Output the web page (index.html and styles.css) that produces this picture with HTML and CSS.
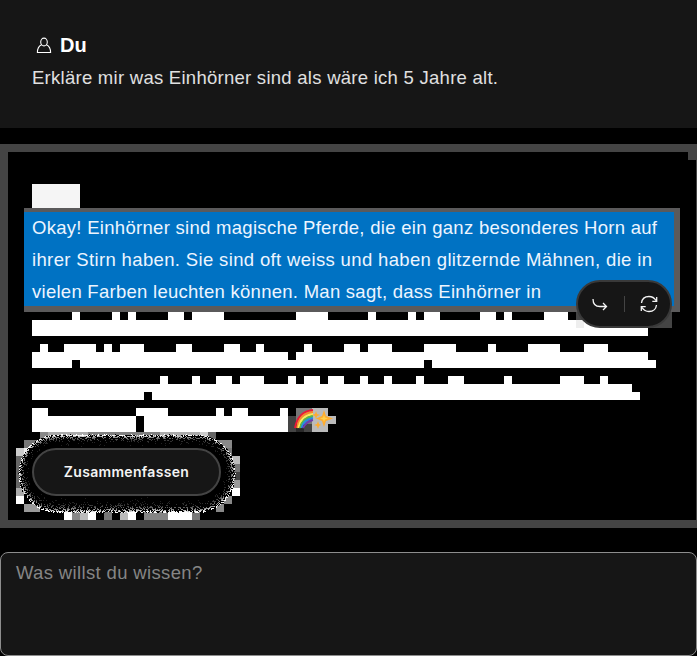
FILE: index.html
```
<!DOCTYPE html>
<html lang="de">
<head>
<meta charset="utf-8">
<title>Chat</title>
<link rel="stylesheet" href="styles.css">
</head>
<body>
<main class="chat">
  <section class="question">
    <h1 class="author">
      <svg class="user-icon" viewBox="0 0 16 17" aria-hidden="true"><ellipse cx="8" cy="5" rx="3.3" ry="3.9"/><path d="M5.6 7.8C3 9 1.4 11.8 1.4 15.5H14.6C14.6 11.8 13 9 10.4 7.8"/></svg>
      <span>Du</span>
    </h1>
    <p class="prompt"><span class="fit" data-width="466">Erkläre mir was Einhörner sind als wäre ich 5 Jahre alt.</span></p>
  </section>
  <section class="answer">
    <svg class="mosaic" viewBox="0 0 697 384" aria-hidden="true" shape-rendering="crispEdges">
      <path id="blocks" fill="#fff"/>
      <path fill="#f5f5f5" d="M32 40h48v24H32z"/>
      <path fill="#444" d="M688 8h9v8h-9z"/>
      <g id="greys"></g>
    </svg>
    <svg class="emoji" viewBox="0 0 48 24" aria-hidden="true">
      <path fill="#777" d="M8 0h16v8H8z"/><path fill="#444" d="M0 8h8v16H0zM16 16h8v8h-8z"/><path fill="#777" d="M8 8h16v8H8z"/><path fill="#292929" d="M8 16h8v8H8z"/><path fill="#bbb" d="M24 0h16v24H24zM40 8h8v8h-8z"/>
      <g fill="none" stroke-width="1.8"><path stroke="#ed1738" d="M7 20C9 8 15 3 25 2"/><path stroke="#ff872b" d="M9 20C11 9 16 5 25 4"/><path stroke="#ffe85a" d="M10.5 20C12 11 17 7 25 6"/><path stroke="#58bd45" d="M12 20C14 12 18 9 25 8"/><path stroke="#268de3" d="M13.5 20C15 14 19 11 25 10"/><path stroke="#713bb0" d="M15 20C17 16 20 13 25 12"/></g>
      <path fill="#ffac2e" d="M36 2l2 6 7 2.5-7 2.5-2 6-2-6-6-2.5 6-2.5zM28 3l1 3 3 1-3 1-1 3-1-3-3-1 3-1zM30 13l1 3 2 1-2 1-1 3-1-3-3-1 3-1z"/>
      <path fill="#ffd04a" d="M36 7l1 2.5 3 1-3 1-1 2.5-1-2.5-3-1 3-1z"/>
    </svg>
    <div class="selection">
      <p><span class="fit" data-width="625">Okay! Einhörner sind magische Pferde, die ein ganz besonderes Horn auf</span></p>
      <p><span class="fit" data-width="620">ihrer Stirn haben. Sie sind oft weiss und haben glitzernde Mähnen, die in</span></p>
      <p><span class="fit" data-width="509">vielen Farben leuchten können. Man sagt, dass Einhörner in</span></p>
    </div>
    <div class="toolbar">
      <svg class="tool-icon" viewBox="0 0 20 20" aria-hidden="true"><path d="M3 5C3 10 6 12.5 10 12.5H16.5M13 9l3.5 3.5L13 16"/></svg>
      <span class="divider"></span>
      <svg class="tool-icon" viewBox="0 0 20 20" aria-hidden="true"><path d="M2.5 9C3 5 6 2.5 10 2.5c3.2 0 5.5 1.6 7 4M17.7 3v4.3h-4.4M17.5 11c-.5 4-3.5 6.5-7.5 6.5-3.2 0-5.5-1.6-7-4M2.3 17v-4.3h4.4"/></svg>
    </div>
    <div class="action">
      <canvas class="halo" id="halo" width="224" height="88"></canvas>
      <button class="summarize"><span class="fit" data-width="125">Zusammenfassen</span></button>
    </div>
  </section>
  <textarea class="composer" placeholder="Was willst du wissen?"></textarea>
</main>
<script src="script.js"></script>
</body>
</html>
```
FILE: styles.css
```
* { box-sizing: border-box; }
body { margin: 0; background: #000; color: #fff; font-family: "Liberation Sans", sans-serif; }
.chat { display: flex; flex-direction: column; width: 697px; height: 656px; overflow: hidden; }
.question { height: 128px; padding: 32px; background: #161616; }
.author { display: flex; align-items: center; gap: 8px; margin: 0; padding-left: 4px; height: 26px; font-size: 20px; line-height: 26px; }
.user-icon { width: 16px; height: 17px; fill: none; stroke: #fff; stroke-width: 1.1; }
.prompt { margin: 4px 0 0; font-size: 18.5px; line-height: 32px; color: #e0e0e0; }
.fit { white-space: nowrap; }
.answer { position: relative; display: flex; flex-direction: column; height: 384px; margin-top: 16px; padding: 56px 16px 0; border: 8px solid #444; border-right-width: 1px; }
.mosaic { position: absolute; left: -8px; top: -8px; width: 697px; height: 384px; }
.emoji { position: absolute; left: 280px; top: 256px; width: 48px; height: 24px; }
.selection { position: relative; width: 656px; height: 104px; padding-left: 8px; border: solid #5b5a5b; border-width: 4px 6px 6px 0; background: #0072c3; }
.selection p { margin: 0; height: 32px; font-size: 18.5px; line-height: 32px; color: #edf5ff; }
.toolbar { position: absolute; left: 568px; top: 128px; width: 96px; height: 48px; display: flex; align-items: center; justify-content: space-between; padding: 0 11px 0 12px; border: 2px solid #393939; border-radius: 24px; background: #161616; }
.tool-icon { width: 20px; height: 20px; fill: none; stroke: #f4f4f4; stroke-width: 1.3; }
.divider { width: 1px; height: 16px; background: #444; }
.action { position: relative; width: 189px; height: 48px; margin: 136px 0 0 8px; }
.halo { position: absolute; left: -18px; top: -18px; }
.summarize { position: relative; width: 189px; height: 48px; padding: 0; border: 2px solid #444; border-radius: 24px; background: #161616; color: #f4f4f4; font: 600 14px/20px Inter, "Liberation Sans", sans-serif; }
.composer { display: block; width: 697px; height: 104px; margin: 24px 0 0; padding: 4px 15px; border: 1px solid #8d8d8d; border-radius: 8px; outline: 0; resize: none; background: #161616; color: #fff; font: 18.5px/32px "Liberation Sans", sans-serif; letter-spacing: .35px; }
.composer::placeholder { color: #858585; opacity: 1; }
```
FILE: script.js
```
// Spread each line's letters to its set measure.
document.querySelectorAll('.fit').forEach(el => {
  const natural = el.getBoundingClientRect().width;
  el.style.letterSpacing = (el.dataset.width - natural) / (el.textContent.length - 1) + 'px';
});

// Rows of 8px blocks: [top, end, cells above, gaps]
const rows = [
  [176, 648, [[72,80],[112,120],[128,136],[168,184],[192,224],[296,328],[368,376],[408,416],[424,440],[480,496],[504,512],[544,568]], []],
  [208, 648, [[40,48],[64,96],[104,112],[120,144],[176,192],[224,240],[256,264],[304,312],[344,360],[368,392],[424,456],[488,496],[528,560],[584,608]], [[72,8],[424,8],[288,0]]],
  [240, 632, [[160,168],[192,200],[216,232],[240,264],[288,296],[304,320],[328,344],[360,368],[384,392],[416,424],[448,464],[504,512],[560,584],[600,608]], [[144,8]]],
  [272, 288, [[32,48],[136,168],[216,224],[232,248],[280,288]], [[136,0],[136,8]]]
];
let d = '';
const cell = (x, y, w = 8) => { d += `M${x} ${y}h${w}v8h${-w}z`; };
rows.forEach(([y, end, tops, holes], i) => {
  tops.forEach(([a, b]) => cell(a, y - 8, b - a));
  for (const dy of [0, 8]) {
    const last = end + (dy && (i === 1 || i === 2) ? 8 : 0);
    for (let x = 32; x < last; x += 8) {
      if (!holes.some(h => h[0] === x && h[1] === dy)) cell(x, y + dy);
    }
  }
});
document.getElementById('blocks').setAttribute('d', d);

// Grey blocks fringing the two floating controls: [x, y, w, h, colour]
const greys = [
  [40,288,8,8,'#888'],[48,288,40,8,'#aaa'],[88,288,72,8,'#808080'],[160,288,40,8,'#aaa'],[200,288,8,8,'#ccc'],[208,288,8,8,'#666'],
  [24,296,16,8,'#777'],[216,296,16,8,'#888'],[16,304,8,8,'#ccc'],[24,304,8,8,'#eee'],[224,304,8,8,'#777'],
  [16,312,8,32,'#666'],[16,344,8,8,'#aaa'],[16,352,8,8,'#fff'],[24,360,16,8,'#999'],[216,360,8,8,'#888'],
  [232,312,8,8,'#bbb'],[232,320,8,8,'#777'],[232,328,8,8,'#444'],[232,336,8,8,'#999'],[232,344,8,8,'#fff'],[224,352,8,8,'#888'],
  [64,368,8,8,'#fff'],[72,368,8,8,'#888'],[80,368,8,8,'#bbb'],[88,368,8,8,'#fff'],[104,368,8,8,'#777'],[120,368,8,8,'#bbb'],[128,368,8,8,'#fff'],
  [144,368,24,8,'#858585'],[168,368,24,8,'#fff'],[192,368,8,8,'#777'],
  [576,168,8,8,'#444'],[576,176,8,8,'#eee'],[648,168,24,16,'#444']
];
document.getElementById('greys').innerHTML = greys.map(([x,y,w,h,c]) =>
  `<rect x="${x}" y="${y}" width="${w}" height="${h}" fill="${c}"/>`).join('');

// Grainy falloff around the button.
const canvas = document.getElementById('halo');
const ctx = canvas.getContext('2d');
const img = ctx.createImageData(224, 88);
let seed = 7;
const rand = () => (seed = (seed * 1664525 + 1013904223) >>> 0) / 4294967296;
for (let y = 0; y < 88; y++) for (let x = 0; x < 224; x++) {
  const px = x - 18, py = y - 18;
  const dx = px < 24 ? 24 - px : px > 165 ? px - 165 : 0;
  const dist = Math.hypot(dx, py - 24) - 24;
  const edge = 13.5 + Math.max(0, (py - 24) / 24) * 1.5 + (rand() - .5) * 1.4;
  if (dist > edge) continue;
  const t = Math.max(0, dist / edge);
  const v = rand() < Math.pow(t, 2) * .65 ? Math.min(255, 30 + 250 * Math.pow(t, 4)) : 0;
  const i = (y * 224 + x) * 4;
  img.data[i] = img.data[i + 1] = img.data[i + 2] = v;
  img.data[i + 3] = 255;
}
ctx.putImageData(img, 0, 0);
```
